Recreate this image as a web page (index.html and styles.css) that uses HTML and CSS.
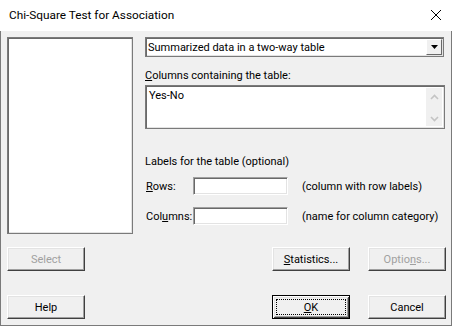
FILE: index.html
```html
<!DOCTYPE html>
<html lang="en">
<head>
    <meta charset="UTF-8">
    <title>Chi-Square Test for Association</title>
    <link rel="stylesheet" href="styles.css">
</head>
<body>
    <div class="dialog">
        <div class="titlebar">
            <span class="title">Chi-Square Test for Association</span>
            <svg class="close" width="12" height="12" viewBox="0 0 12 12">
                <path d="M1 1 L11 11 M11 1 L1 11" stroke="#000" stroke-width="1" fill="none"/>
            </svg>
        </div>

        <div class="content">
            <div class="main">
                <!-- Список переменных -->
                <div class="listbox"></div>

                <div class="options">
                    <div class="combo">
                        <span class="combo-text">Summarized data in a two-way table</span>
                        <span class="combo-btn">
                            <svg width="7" height="4" viewBox="0 0 7 4"><path d="M0 0 H7 L3.5 4 Z" fill="#000"/></svg>
                        </span>
                    </div>

                    <div class="field-label"><u>C</u>olumns containing the table:</div>
                    <div class="memo">
                        <span class="memo-text">Yes-No</span>
                        <div class="vscroll">
                            <svg width="9" height="6" viewBox="0 0 9 6"><path d="M1 5 L4.5 1.5 L8 5" stroke="#c4c4c4" stroke-width="1.6" fill="none"/></svg>
                            <svg width="9" height="6" viewBox="0 0 9 6"><path d="M1 1 L4.5 4.5 L8 1" stroke="#c4c4c4" stroke-width="1.6" fill="none"/></svg>
                        </div>
                    </div>

                    <div class="group-label">Labels for the table (optional)</div>
                    <div class="label-row">
                        <span class="row-label"><u>R</u>ows:</span>
                        <span class="textbox"></span>
                        <span class="hint">(column with row labels)</span>
                    </div>
                    <div class="label-row second">
                        <span class="row-label">Col<u>u</u>mns:</span>
                        <span class="textbox"></span>
                        <span class="hint">(name for column category)</span>
                    </div>
                </div>
            </div>

            <div class="button-row first">
                <button class="btn select" disabled>Select</button>
                <button class="btn push-right"><u>S</u>tatistics...</button>
                <button class="btn" disabled>Optio<u>n</u>s...</button>
            </div>
            <div class="button-row last">
                <button class="btn">Help</button>
                <button class="btn default push-right"><span class="focus"><u>O</u>K</span></button>
                <button class="btn">Cancel</button>
            </div>
        </div>
    </div>
</body>
</html>
```

FILE: styles.css
```css
html, body {
    margin: 0;
    padding: 0;
}
body {
    width: 452px;
    height: 326px;
    font-family: Roboto, 'Noto Sans', sans-serif;
    font-size: 11px;
    color: #000;
    background: #fff;
    white-space: nowrap;
}
.dialog {
    width: 452px;
    height: 326px;
    background: #f0f0f0;
    display: flex;
    flex-direction: column;
}
.titlebar {
    height: 31px;
    flex: none;
    background: #fff;
    display: flex;
    align-items: center;
    padding: 0 10px 0 9px;
}
.title {
    font-size: 11.8px;
    flex: 1;
    margin-top: -1px;
}
.close {
    margin-top: -2px;
}

/* Рамка окна видна только под заголовком */
.content {
    flex: 1;
    padding: 6px 5px 0 6px;
    border: 1px solid #7a7a7a;
    border-top: none;
}
.main {
    display: grid;
    grid-template-columns: 126px 300px;
    column-gap: 12px;
    height: 197px;
}

/* Утопленная рамка для полей */
.listbox, .memo, .textbox, .combo {
    box-sizing: border-box;
    border: 1px solid;
    border-color: #a0a0a0 #fff #fff #a0a0a0;
    box-shadow: inset 1px 1px #696969, inset -1px -1px #e3e3e3;
    background: #fff;
}
.listbox {
    height: 197px;
    border-color: #7a7a7a;
}

.combo {
    width: 299px;
    height: 20px;
    display: flex;
    align-items: center;
    border-color: #7a7a7a;
}
.combo-text {
    flex: 1;
    padding-left: 2px;
}
.combo-btn {
    width: 16px;
    height: 16px;
    margin-right: 1px;
    box-sizing: border-box;
    border: 1px solid;
    border-color: #fff #696969 #696969 #fff;
    background: #f0f0f0;
    display: flex;
    align-items: center;
    justify-content: center;
}

.field-label {
    margin-top: 11px;
    height: 17px;
    line-height: 15px;
}
.memo {
    height: 44px;
    display: flex;
    border-color: #7a7a7a;
}
.memo-text {
    flex: 1;
    padding: 3px 0 0 3px;
}
.vscroll {
    width: 16px;
    margin: 2px 2px 2px 0;
    background: #f0f0f0;
    display: flex;
    flex-direction: column;
    justify-content: space-between;
    align-items: center;
    padding: 6px 0 4px;
}

.group-label {
    margin-top: 25px;
    line-height: 15px;
}
.label-row {
    display: flex;
    align-items: center;
    margin-top: 8px;
}
.label-row.second {
    margin-top: 12px;
}
.row-label {
    width: 48px;
    flex: none;
    padding-left: 1px;
    box-sizing: border-box;
}
.textbox {
    width: 95px;
    height: 18px;
    flex: none;
}
.hint {
    margin-left: 14px;
}

.button-row {
    display: flex;
}
.button-row.first {
    margin-top: 13px;
}
.button-row.last {
    margin-top: 24px;
}
.btn {
    width: 78px;
    height: 24px;
    margin-left: 18px;
    padding: 0;
    font: inherit;
    color: #000;
    background: #f0f0f0;
    border: 1px solid;
    border-color: #fff #404040 #404040 #fff;
    box-shadow: inset -1px -1px #a0a0a0, inset 1px 1px #e3e3e3;
}
.button-row .btn:first-child {
    margin-left: 0;
}
.btn.select {
    margin-left: 24px;
}
.btn.push-right {
    margin-left: auto;
}
.btn:disabled {
    color: #a0a0a0;
}
.btn.default {
    border: 1px solid #000;
    box-shadow: inset 1px 1px #fff, inset -1px -1px #404040, inset 2px 2px #e3e3e3, inset -2px -2px #a0a0a0;
    padding: 3px;
    box-sizing: border-box;
}
.focus {
    display: flex;
    align-items: center;
    justify-content: center;
    height: 100%;
    box-sizing: border-box;
    border: 1px dotted #000;
}
```
